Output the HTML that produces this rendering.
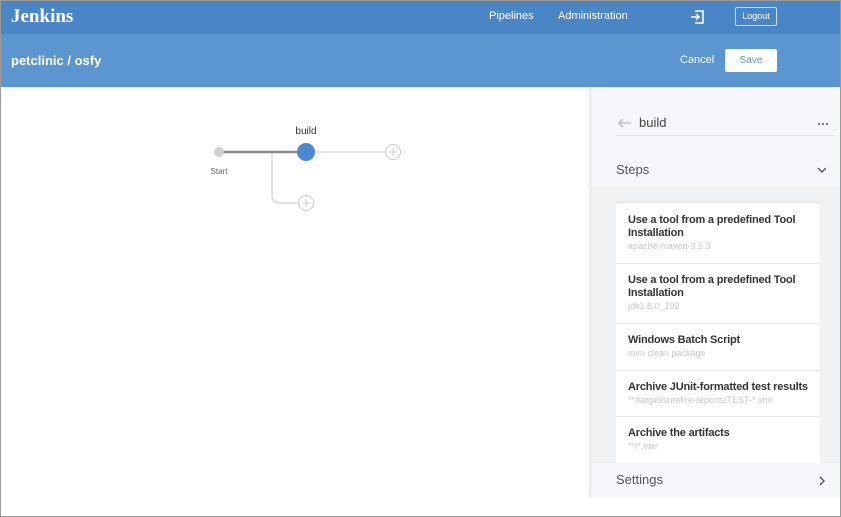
<!DOCTYPE html>
<html><head><style>
*{margin:0;padding:0;box-sizing:border-box}
body{width:841px;height:517px;overflow:hidden;font-family:"Liberation Sans",sans-serif;background:#fff;position:relative}
.frame{position:absolute;inset:0;border:1px solid #9a9a9a;z-index:10;pointer-events:none}
.top{position:absolute;left:0;top:0;width:841px;height:34px;background:#4a85c6;color:#fff}
.sub{position:absolute;left:0;top:34px;width:841px;height:53px;background:#5b96d1;color:#fff}
.abs{position:absolute}
.panel{position:absolute;left:590px;top:87px;width:250px;height:410px;background:#f5f7fa;border-left:1px solid #e2e5e8;box-shadow:-2px 0 4px rgba(0,0,0,.06)}
.card{position:absolute;left:25px;width:204px;background:#fff;border-bottom:1px solid #e8e8e8;padding:10px 12px 0 12px}
.card b{display:block;font-size:11px;color:#333;line-height:13px;font-weight:bold;white-space:nowrap;letter-spacing:-0.2px}
.card span{display:block;font-size:9px;color:#c8c8c8;line-height:13px;white-space:nowrap}
</style></head><body>
<div class="top">
<div class="abs" style="left:11px;top:6px;font-family:'Liberation Serif',serif;font-weight:bold;font-size:19px">Jenkins</div>
<div class="abs" style="left:489px;top:10px;font-size:11px">Pipelines</div>
<div class="abs" style="left:558px;top:10px;font-size:11px">Administration</div>
<svg class="abs" style="left:690px;top:10px" width="14" height="14" viewBox="0 0 14 14" fill="none" stroke="#fff" stroke-width="1.5"><path d="M5 1H13V13H5M1 7H9M6 4L9 7L6 10"/></svg>
<div class="abs" style="left:735px;top:7px;width:42px;height:19px;border:1px solid #cfe0f2;border-radius:2px;font-size:9px;text-align:center;line-height:17px">Logout</div>
</div>
<div class="sub">
<div class="abs" style="left:11px;top:19px;font-size:13px;font-weight:bold">petclinic / osfy</div>
<div class="abs" style="left:680px;top:20px;font-size:11px">Cancel</div>
<div class="abs" style="left:725px;top:15px;width:52px;height:23px;background:#fff;border-radius:2px;color:#5b96d1;font-size:10px;text-align:center;line-height:23px">Save</div>
</div>
<svg class="abs" style="left:190px;top:115px" width="230" height="105">
<path d="M82 37V80Q82 88 90 88H107" stroke="#e0e0e0" stroke-width="2" fill="none"/>
<line x1="116" y1="37" x2="194" y2="37" stroke="#e3e3e3" stroke-width="2"/>
<line x1="29" y1="37" x2="108" y2="37" stroke="#8a8a8a" stroke-width="2.5"/>
<circle cx="29" cy="37" r="5" fill="#d0d0d0"/>
<circle cx="116" cy="37" r="9" fill="#4a8ad2"/>
<circle cx="203" cy="37" r="7.5" fill="#fff" stroke="#ccc"/><path d="M203 33V41M199 37H207" stroke="#ccc"/>
<circle cx="116" cy="88" r="7.5" fill="#fff" stroke="#ccc"/><path d="M116 84V92M112 88H120" stroke="#ccc"/>
<text x="116" y="19" font-size="10" fill="#333" text-anchor="middle" font-family="Liberation Sans">build</text>
<text x="29" y="59" font-size="8" fill="#666" text-anchor="middle" font-family="Liberation Sans">Start</text>
</svg>
<div class="panel">
<svg class="abs" style="left:27px;top:31px" width="14" height="10" fill="none" stroke="#bbb" stroke-width="1.3"><path d="M13 5H1M5 1L1 5L5 9"/></svg>
<div class="abs" style="left:48px;top:28px;font-size:13px;color:#444">build</div>
<svg class="abs" style="left:226px;top:35px" width="12" height="4" fill="#778"><circle cx="2" cy="2" r="1.2"/><circle cx="6" cy="2" r="1.2"/><circle cx="10" cy="2" r="1.2"/></svg>
<div class="abs" style="left:25px;top:48px;width:218px;height:1px;background:#e0e3e6"></div>
<div class="abs" style="left:25px;top:75px;font-size:13px;color:#555">Steps</div>
<svg class="abs" style="left:226px;top:80px" width="10" height="7" fill="none" stroke="#555" stroke-width="1.4"><path d="M1 1L5 5L9 1"/></svg>
<div class="abs" style="left:0;top:99px;width:250px;height:311px;background:#eff1f3"></div>
<div class="abs" style="left:25px;top:115px;width:204px;height:265px;background:#fff;border:1px solid #e2e2e2"></div>
<div class="card" style="top:117px;height:60px"><b>Use a tool from a predefined Tool<br>Installation</b><span>apache-maven-3.5.3</span></div>
<div class="card" style="top:177px;height:60px"><b>Use a tool from a predefined Tool<br>Installation</b><span>jdk1.8.0_192</span></div>
<div class="card" style="top:237px;height:47px"><b>Windows Batch Script</b><span>mvn clean package</span></div>
<div class="card" style="top:284px;height:46px"><b>Archive JUnit-formatted test results</b><span>**/target/surefire-reports/TEST-*.xml</span></div>
<div class="card" style="top:330px;height:46px;border-bottom:none"><b>Archive the artifacts</b><span>**/*.war</span></div>
<div class="abs" style="left:0;top:376px;width:250px;height:34px;background:#f5f7fa"></div>
<div class="abs" style="left:25px;top:385px;font-size:13px;color:#555">Settings</div>
<svg class="abs" style="left:228px;top:389px" width="7" height="10" fill="none" stroke="#555" stroke-width="1.4"><path d="M1 1L5 5L1 9"/></svg>
</div>
<div class="frame"></div>
</body></html>
